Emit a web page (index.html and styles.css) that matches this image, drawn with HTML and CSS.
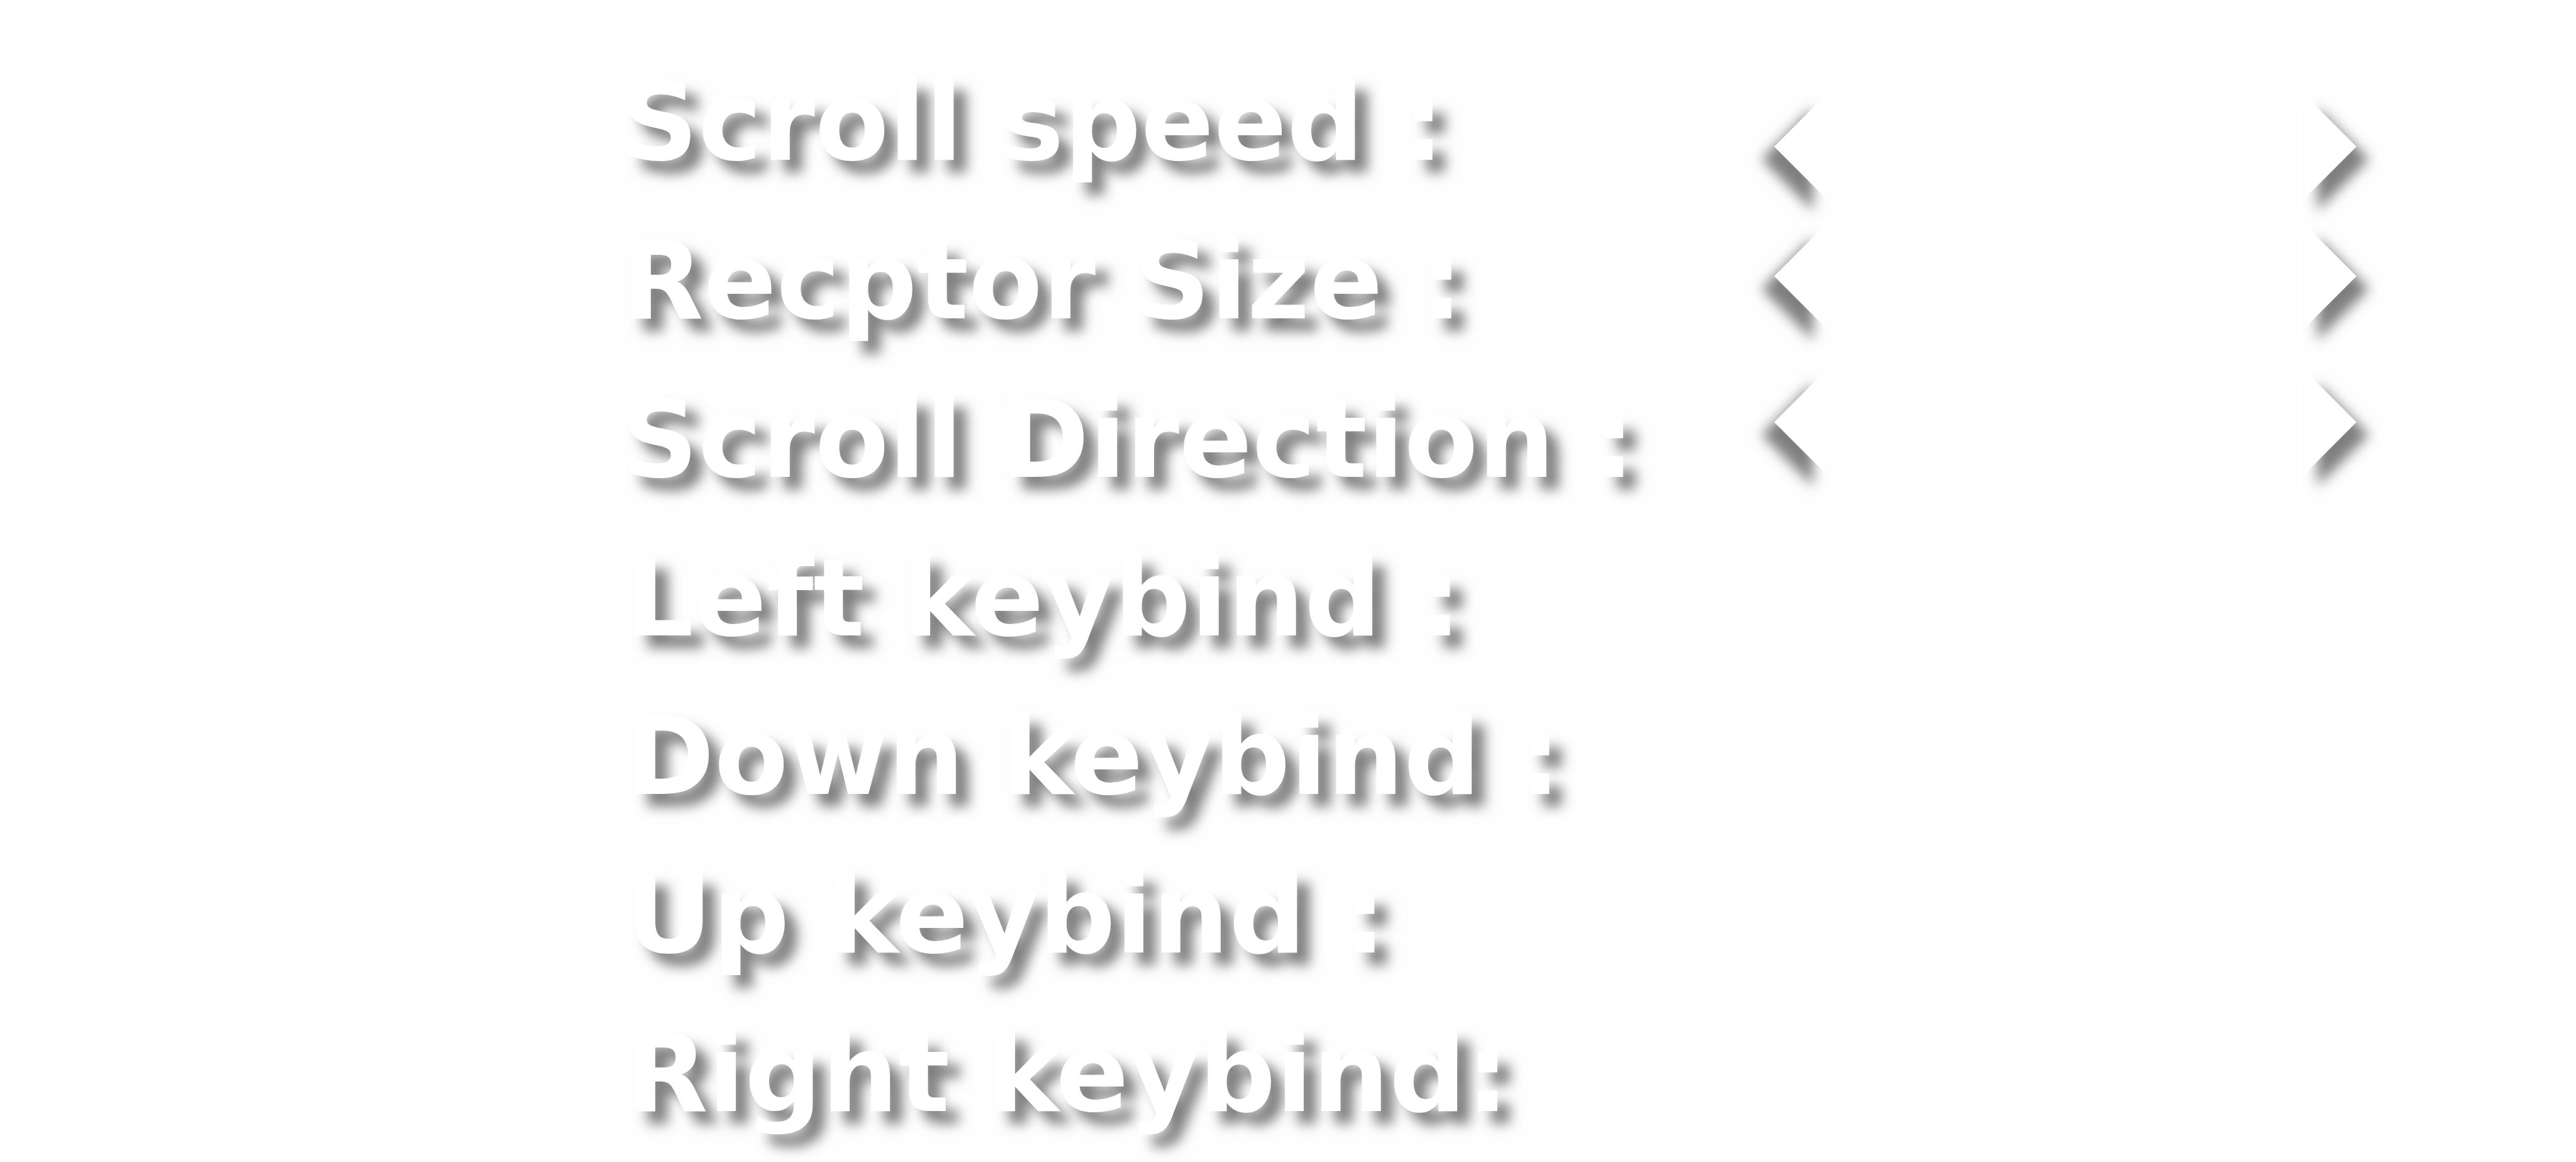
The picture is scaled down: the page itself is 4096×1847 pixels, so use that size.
FILE: index.html
```html
<!DOCTYPE html>
<html lang="en">
<head>
<meta charset="utf-8">
<title>Settings</title>
<link rel="stylesheet" href="styles.css">
</head>
<body>
<main class="settings">
  <div class="labels">
    <div class="group">
      <p class="label">Scroll speed :</p>
      <p class="label">Recptor Size :</p>
      <p class="label">Scroll Direction :</p>
    </div>
    <div class="group group-keys">
      <p class="label">Left keybind :</p>
      <p class="label">Down keybind :</p>
      <p class="label">Up keybind :</p>
      <p class="label">Right keybind:</p>
    </div>
  </div>
  <div class="controls">
    <div class="stepper">
      <button class="arrow arrow-prev" type="button" aria-label="Decrease scroll speed"><svg viewBox="0 0 82 164"><path d="M82 0V164L0 82Z"/></svg></button>
      <button class="arrow arrow-next" type="button" aria-label="Increase scroll speed"><svg viewBox="0 0 82 164"><path d="M0 0V164L82 82Z"/></svg></button>
    </div>
    <div class="stepper">
      <button class="arrow arrow-prev" type="button" aria-label="Decrease receptor size"><svg viewBox="0 0 82 164"><path d="M82 0V164L0 82Z"/></svg></button>
      <button class="arrow arrow-next" type="button" aria-label="Increase receptor size"><svg viewBox="0 0 82 164"><path d="M0 0V164L82 82Z"/></svg></button>
    </div>
    <div class="stepper stepper-direction">
      <button class="arrow arrow-prev" type="button" aria-label="Previous scroll direction"><svg viewBox="0 0 82 164"><path d="M82 0V164L0 82Z"/></svg></button>
      <button class="arrow arrow-next" type="button" aria-label="Next scroll direction"><svg viewBox="0 0 82 164"><path d="M0 0V164L82 82Z"/></svg></button>
    </div>
  </div>
</main>
</body>
</html>
```
FILE: styles.css
```css
body {
  margin: 0;
  background: #fefefe;
  color: #fff;
  font-family: Verdana, "DejaVu Sans", sans-serif;
}

.settings {
  box-sizing: border-box;
  display: grid;
  grid-template-columns: 1fr 926px;
  min-height: 100vh;
  padding: 69px 349px 0 24%;
}

.labels {
  padding-left: 4px;
}

.group-keys {
  padding-left: 7px;
}

.label {
  margin: 0;
  font-size: 171px;
  font-weight: 700;
  line-height: 252px;
  white-space: nowrap;
  text-shadow: 20px 20px 20px rgba(0, 0, 0, 0.5);
}

.controls {
  display: flex;
  flex-direction: column;
  gap: 42px;
  padding-top: 82px;
}

.stepper {
  display: flex;
  justify-content: space-between;
}

.stepper-direction {
  padding-top: 26px;
}

.arrow {
  width: 82px;
  height: 164px;
  padding: 0;
  border: 0;
  background: none;
  cursor: pointer;
}

.arrow svg {
  display: block;
  width: 82px;
  height: 164px;
  overflow: visible;
  fill: #fff;
}

.arrow-prev {
  filter: drop-shadow(-20px 20px 10px rgba(0, 0, 0, 0.5));
}

.arrow-next {
  filter: drop-shadow(20px 20px 10px rgba(0, 0, 0, 0.5));
}
```
